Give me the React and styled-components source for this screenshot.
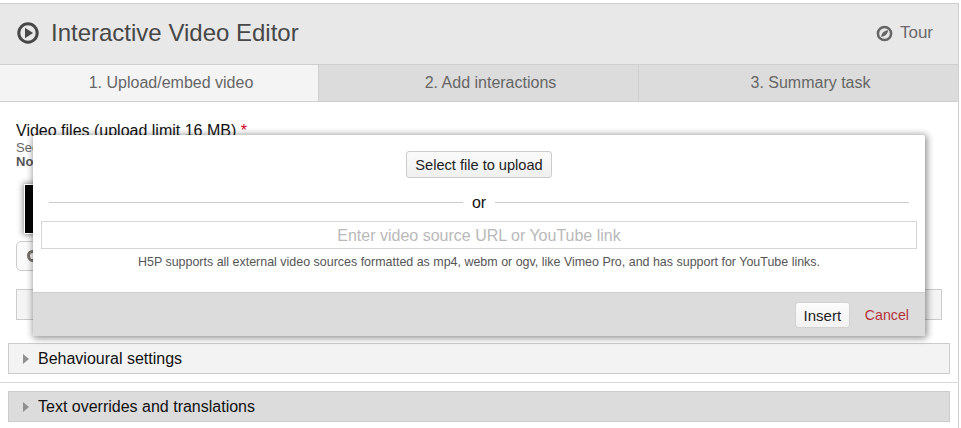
import React from "react";
import styled, { createGlobalStyle } from "styled-components";

const Global = createGlobalStyle`
  html, body { margin: 0; padding: 0; background: #fff; }
  body { font-family: "Liberation Sans", Arial, sans-serif; }
  * { box-sizing: border-box; }
`;
const Page = styled.div`
  position: relative;
  width: 961px;
  height: 428px;
  padding-top: 3px;
  overflow: hidden;
`;
const Frame = styled.div`
  width: 959px;
  height: 425px;
  border-top: 1px solid #cfcfcf;
  border-right: 1px solid #cfcfcf;
`;
const Header = styled.header`
  height: 60px;
  background: #e8e8e8;
  display: flex;
  align-items: center;
  justify-content: space-between;
  padding: 0 25px 2px 17px;
`;
const TitleWrap = styled.div`
  display: flex;
  align-items: center;
  gap: 12px;
`;
const Title = styled.h1`
  margin: 0;
  font-size: 24px;
  font-weight: 400;
  color: #474747;
`;
const Tour = styled.div`
  display: flex;
  align-items: center;
  gap: 7px;
  font-size: 17px;
  color: #6a6a6a;
`;
const Tabs = styled.nav`
  display: grid;
  grid-template-columns: 318px 320px 320px;
  height: 38px;
  border-top: 1px solid #cfcfcf;
  border-bottom: 1px solid #cfcfcf;
`;
const Tab = styled.div`
  display: flex;
  align-items: center;
  justify-content: center;
  padding-left: 24px;
  font-size: 16px;
  color: #666;
  background: ${(p) => (p.$active ? "#f4f4f4" : "#dcdcdc")};
  border-left: ${(p) => (p.$first ? "none" : "1px solid #cfcfcf")};
`;
const Body = styled.main`
  display: flex;
  flex-direction: column;
`;
const Field = styled.section`
  padding: 20px 16px 0 16px;
`;
const Label = styled.div`
  font-size: 16px;
  line-height: 18px;
  color: #111;
  span { color: #d0021b; }
`;
const Desc = styled.div`
  font-size: 13px;
  line-height: 14px;
  color: #666;
  margin-top: 1px;
`;
const Note = styled(Desc)`
  font-weight: 700;
  margin-top: 0;
  color: #555;
`;
const Thumb = styled.div`
  width: 60px;
  height: 48px;
  background: linear-gradient(90deg, #000, #2a2a2a);
  margin: 16px 0 0 9px;
  box-shadow: 0 0 0 1px #fff, 0 0 6px 2px rgba(0, 0, 0, 0.45);
`;
const AddButton = styled.div`
  width: 120px;
  height: 30px;
  margin-top: 8px;
  border: 1px solid #ccc;
  border-radius: 5px;
  background: #fafafa;
  padding: 8px 0 0 10px;
`;
const AddDot = styled.span`
  display: block;
  width: 11px;
  height: 12px;
  border-radius: 50% 50% 50% 50% / 45% 45% 55% 55%;
  border: 3px solid #77706a;
`;
const GroupBox = styled.div`
  height: 31px;
  margin-top: 18px;
  border: 1px solid #ccc;
  background: #f4f4f4;
`;
const Group = styled.div`
  height: 31px;
  margin: ${(p) => p.$margin};
  border: 1px solid #ccc;
  background: ${(p) => (p.$dark ? "#dcdcdc" : "#f3f3f3")};
  display: flex;
  align-items: center;
  gap: 9px;
  padding-left: 14px;
  font-size: 16px;
  color: #111;
`;
const Rule = styled.hr`
  border: 0;
  border-top: 1px solid #d8d8d8;
  margin: 8px 0 0;
`;
const Caret = styled.span`
  width: 0;
  height: 0;
  border-left: 6px solid #8f8f8f;
  border-top: 5px solid transparent;
  border-bottom: 5px solid transparent;
`;
const Dialog = styled.div`
  position: absolute;
  left: 33px;
  top: 135px;
  width: 892px;
  height: 201px;
  background: #fff;
  border-radius: 2px;
  box-shadow: 1px 1px 7px 1px rgba(0, 0, 0, 0.45);
  display: flex;
  flex-direction: column;
`;
const DialogBody = styled.div`
  flex: 1;
  padding: 16px 8px 0;
  display: flex;
  flex-direction: column;
  align-items: center;
`;
const FileButton = styled.button`
  height: 27px;
  width: 146px;
  padding: 0;
  border: 1px solid #ccc;
  border-radius: 3px;
  background: linear-gradient(#fafafa, #f0f0f0);
  font: 14.6px "Liberation Sans", Arial, sans-serif;
  color: #222;
`;
const OrRow = styled.div`
  align-self: stretch;
  display: flex;
  align-items: center;
  gap: 9px;
  padding: 0 8px;
  margin-top: 15px;
  height: 18px;
  font-size: 16px;
  color: #111;
  &::before, &::after {
    content: "";
    flex: 1;
    border-top: 1px solid #ccc;
  }
`;
const OrText = styled.span`
  padding-top: 2px;
`;
const UrlInput = styled.input`
  align-self: stretch;
  height: 28px;
  margin-top: 10px;
  border: 1px solid #d6d6d6;
  text-align: center;
  padding: 1px 0 0;
  font: 16px "Liberation Sans", Arial, sans-serif;
  &::placeholder { color: #b9b9b9; opacity: 1; }
`;
const Help = styled.p`
  margin: 6px 0 0;
  font-size: 12.46px;
  line-height: 14px;
  color: #555;
`;
const DialogFooter = styled.div`
  height: 44px;
  border-top: 1px solid #cfcfcf;
  background: #dcdcdc;
  display: flex;
  align-items: center;
  justify-content: flex-end;
  gap: 15px;
  padding: 1px 16px 0 0;
  border-radius: 0 0 2px 2px;
`;
const InsertButton = styled.button`
  width: 55px;
  height: 26px;
  padding: 0;
  border: 1px solid #d2d2d2;
  border-radius: 3px;
  background: linear-gradient(#fcfcfc, #f2f2f2);
  font: 15px "Liberation Sans", Arial, sans-serif;
  color: #222;
`;
const Cancel = styled.span`
  font-size: 14.2px;
  color: #b5313a;
`;

const PlayIcon = () => (
  <svg width="22" height="22" viewBox="0 0 22 22" aria-hidden="true">
    <circle cx="11" cy="11" r="9.2" fill="none" stroke="#474747" strokeWidth="3" />
    <path d="M8 5.8 L16 11 L8 16.2 Z" fill="#474747" />
  </svg>
);
const CompassIcon = () => (
  <svg width="17" height="17" viewBox="0 0 16 16" aria-hidden="true">
    <circle cx="8" cy="8" r="6.2" fill="none" stroke="#666" strokeWidth="2.4" />
    <path d="M11.4 4.6 C11 8 9.5 10.2 5 11.2 C5 8 7 5.4 11.4 4.6 Z" fill="#666" />
  </svg>
);

export default function App() {
  return (
    <Page>
      <Global />
      <Frame>
        <Header>
          <TitleWrap>
            <PlayIcon />
            <Title>Interactive Video Editor</Title>
          </TitleWrap>
          <Tour>
            <CompassIcon />
            Tour
          </Tour>
        </Header>
        <Tabs>
          <Tab $active $first>1. Upload/embed video</Tab>
          <Tab>2. Add interactions</Tab>
          <Tab>3. Summary task</Tab>
        </Tabs>
        <Body>
          <Field>
            <Label>Video files (upload limit 16 MB) <span>*</span></Label>
            <Desc>See</Desc>
            <Note>Note</Note>
            <Thumb />
            <AddButton><AddDot /></AddButton>
            <GroupBox />
          </Field>
          <Group $margin="23px 8px 0 8px"><Caret />Behavioural settings</Group>
          <Rule />
          <Group $margin="8px 8px 0 8px" $dark><Caret />Text overrides and translations</Group>
        </Body>
      </Frame>
      <Dialog>
        <DialogBody>
          <FileButton>Select file to upload</FileButton>
          <OrRow><OrText>or</OrText></OrRow>
          <UrlInput placeholder="Enter video source URL or YouTube link" />
          <Help>H5P supports all external video sources formatted as mp4, webm or ogv, like Vimeo Pro, and has support for YouTube links.</Help>
        </DialogBody>
        <DialogFooter>
          <InsertButton>Insert</InsertButton>
          <Cancel>Cancel</Cancel>
        </DialogFooter>
      </Dialog>
    </Page>
  );
}
